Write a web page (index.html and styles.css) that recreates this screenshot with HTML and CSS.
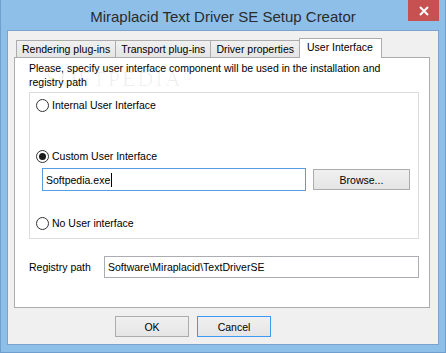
FILE: index.html
```html
<!DOCTYPE html>
<html lang="en">
  <head>
    <meta charset="UTF-8" />
    <title>Miraplacid Text Driver SE Setup Creator</title>
    <link rel="stylesheet" href="styles.css">
  </head>
  <body>
    <div class="window">
      <div class="titlebar">
        <span class="title">Miraplacid Text Driver SE Setup Creator</span>
        <span class="close">
          <svg width="10" height="10" viewBox="0 0 10 10">
            <path d="M1 1L9 9M9 1L1 9" stroke="#fff" stroke-width="2" />
          </svg>
        </span>
      </div>

      <div class="client">
        <ul class="tabs">
          <li class="tab">Rendering plug-ins</li>
          <li class="tab">Transport plug-ins</li>
          <li class="tab">Driver properties</li>
          <li class="tab active">User Interface</li>
        </ul>

        <div class="panel">
          <span class="watermark">SOFTPEDIA</span>
          <p class="intro">
            Please, specify user interface component will be used in the installation and
            registry path
          </p>

          <div class="group">
            <label class="radio first">
              <span class="dot"></span>Internal User Interface
            </label>
            <label class="radio second">
              <span class="dot checked"></span>Custom User Interface
            </label>
            <div class="file-row">
              <div class="field focus">Softpedia.exe<span class="caret"></span></div>
              <button class="btn browse">Browse...</button>
            </div>
            <label class="radio third">
              <span class="dot"></span>No User interface
            </label>
          </div>

          <div class="reg-row">
            <span class="reg-label">Registry path</span>
            <div class="field reg">Software\Miraplacid\TextDriverSE</div>
          </div>
        </div>

        <div class="actions">
          <button class="btn ok">OK</button>
          <button class="btn cancel">Cancel</button>
        </div>
      </div>
    </div>
  </body>
</html>
```

FILE: styles.css
```css
@charset 'utf-8';
* {
  margin: 0;
  padding: 0;
  box-sizing: border-box;
}

body {
  font-family: "Liberation Sans", Arial, sans-serif;
  font-size: 10.5px;
  color: #000;
  background: #8ebfe9;
}

.window {
  width: 446px;
  height: 353px;
  background: #8ebfe9;
  border: 1px solid #6f9fcf;
  border-top: none;
  padding: 0 6px 7px;
  display: flex;
  flex-direction: column;
}

/* 타이틀 바 */
.titlebar {
  height: 30px;
  display: grid;
  grid-template-columns: 1fr auto 1fr;
  align-items: start;
}
.title {
  grid-column: 2;
  font-size: 15px;
  color: #2b2b2b;
  padding-top: 8px;
}
.close {
  grid-column: 3;
  justify-self: end;
  width: 31px;
  height: 21px;
  background: #c75050;
  display: flex;
  align-items: center;
  justify-content: center;
}

.client {
  flex: 1;
  background: #f0f0f0;
  border: 1px solid #7ba3cb;
  padding: 7px 8px 0 6px;
  display: flex;
  flex-direction: column;
}

/* 탭 */
.tabs {
  list-style: none;
  display: flex;
  align-items: flex-end;
  padding-left: 2px;
  height: 19px;
}
.tab {
  height: 17px;
  line-height: 16px;
  padding: 0 5px;
  border: 1px solid #acacac;
  border-bottom: none;
  background: linear-gradient(#f0f0f0, #e5e5e5);
  margin-right: -1px;
  white-space: nowrap;
}
.tab.active {
  height: 20px;
  line-height: 17px;
  background: #fff;
  position: relative;
  z-index: 1;
  margin-bottom: -1px;
  padding: 0 8px 0 7px;
}

.panel {
  height: 251px;
  background: #fff;
  border: 1px solid #acacac;
  padding: 3px 10px 0 14px;
  position: relative;
}
.intro {
  line-height: 14px;
  width: 380px;
}
.watermark {
  position: absolute;
  left: 31px;
  top: 8px;
  font-family: "Liberation Serif", serif;
  font-size: 22px;
  letter-spacing: 2px;
  color: rgba(0, 0, 0, 0.06);
}

.group {
  margin-top: 3px;
  width: 390px;
  height: 147px;
  border: 1px solid #dcdcdc;
  padding: 5px 0 0 6px;
}
.radio {
  display: flex;
  align-items: center;
  gap: 3px;
  height: 14px;
}
.radio.second {
  margin-top: 37px;
}
.radio.third {
  margin-top: 25px;
}
.dot {
  width: 13px;
  height: 13px;
  border: 1px solid #333;
  border-radius: 50%;
  background: #fff;
  display: flex;
  align-items: center;
  justify-content: center;
}
.dot.checked::after {
  content: "";
  width: 7px;
  height: 7px;
  border-radius: 50%;
  background: #1a1a1a;
}

.file-row {
  display: flex;
  align-items: center;
  gap: 7px;
  margin: 5px 0 0 6px;
}

.field {
  height: 23px;
  border: 1px solid #abadb3;
  background: #fff;
  padding: 0 3px;
  display: flex;
  align-items: center;
}
.field.focus {
  width: 264px;
  border-color: #569de5;
}
.caret {
  width: 1px;
  height: 14px;
  background: #000;
  margin-left: 1px;
}

.btn {
  font: inherit;
  color: #000;
  height: 21px;
  border: 1px solid #acacac;
  background: linear-gradient(#f0f0f0, #e5e5e5);
}
.browse {
  width: 97px;
}

.reg-row {
  display: flex;
  align-items: center;
  margin-top: 17px;
}
.reg-label {
  width: 75px;
}
.field.reg {
  width: 315px;
  height: 22px;
}

.actions {
  display: flex;
  gap: 8px;
  padding: 8px 0 0 101px;
}
.ok,
.cancel {
  width: 74px;
}
.cancel {
  border-color: #3c9af0;
}
```
